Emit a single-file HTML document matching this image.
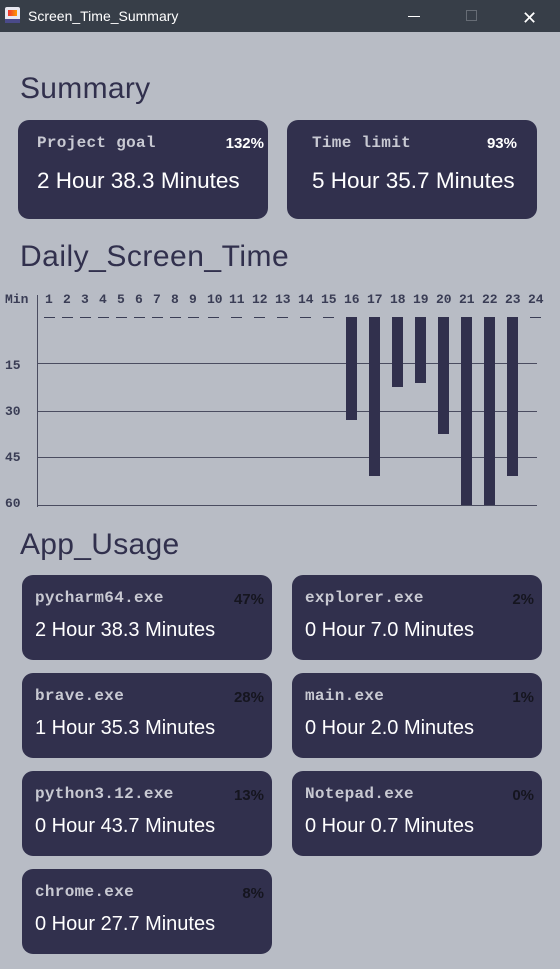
<!DOCTYPE html>
<html><head><meta charset="utf-8"><style>
*{margin:0;padding:0;box-sizing:border-box}
body{width:560px;height:969px;background:#b8bcc5;position:relative;overflow:hidden;font-family:"Liberation Sans",sans-serif}
.tb{position:absolute;left:0;top:0;width:560px;height:32px;background:#373e48;color:#fff;font-size:14px}
.h{position:absolute;left:20px;font-size:30px;color:#31304d;letter-spacing:0.3px}
.card{position:absolute;width:250px;background:#31304d;border-radius:11px}
.lab{position:absolute;left:19px;font-family:"Liberation Mono",monospace;font-size:16px;color:#c8c9d2;font-weight:bold;letter-spacing:0.3px}
.pct{position:absolute;right:4px;font-family:"Liberation Sans",sans-serif;font-weight:bold;font-size:15px;color:#fff}
.val{position:absolute;left:19px;font-size:21.5px;color:#fff;white-space:nowrap}
.ax{position:absolute;font-family:"Liberation Mono",monospace;font-weight:bold;font-size:13px;color:#3a3d55}
.gl{position:absolute;left:38px;width:499px;height:1px;background:#4a4c60}
.bar{position:absolute;width:11px;background:#31304d;top:317px}
.d{position:absolute;top:317px;width:11px;height:1px;background:#3a3d55}
.app .pct{color:#15151f;font-weight:bold;font-family:"Liberation Sans",sans-serif;font-size:15px;right:8px}
</style></head><body>
<div class="tb">
<div style="position:absolute;left:5px;top:7px;width:15px;height:16px;background:#e8e8f0;border-radius:2px"><div style="position:absolute;left:3px;top:3px;width:9px;height:6px;background:linear-gradient(90deg,#e33,#f90)"></div><div style="position:absolute;left:0;bottom:0;width:15px;height:4px;background:#4a4a8a"></div></div>
<div style="position:absolute;left:28px;top:8px">Screen_Time_Summary</div>
<div style="position:absolute;left:408px;top:16px;width:12px;height:1px;background:#fff"></div>
<div style="position:absolute;left:466px;top:10px;width:11px;height:11px;border:1px solid #666c75"></div>
<div style="position:absolute;left:522px;top:8px;color:#fff;font-size:18px">✕</div>
</div>

<div class="h" style="top:72px">Summary</div>
<div class="card" style="left:18px;top:120px;height:99px">
<div class="lab" style="top:14px">Project goal</div><div class="pct" style="top:15px">132%</div>
<div class="val" style="top:48px;font-size:22.5px">2 Hour 38.3 Minutes</div></div>
<div class="card" style="left:287px;top:120px;height:99px">
<div class="lab" style="top:14px;left:25px">Time limit</div><div class="pct" style="top:15px;right:20px">93%</div>
<div class="val" style="top:48px;left:25px;font-size:22.5px">5 Hour 35.7 Minutes</div></div>

<div class="h" style="top:240px;letter-spacing:0.5px">Daily_Screen_Time</div>
<div class="ax" style="left:5px;top:292px">Min</div>
<div style="position:absolute;left:37px;top:295px;width:1px;height:212px;background:#4a4c60"></div>
<div class="gl" style="top:363px"></div><div class="gl" style="top:411px"></div><div class="gl" style="top:457px"></div><div class="gl" style="top:505px"></div>
<div class="ax" style="left:5px;top:358px">15</div>
<div class="ax" style="left:5px;top:404px">30</div>
<div class="ax" style="left:5px;top:450px">45</div>
<div class="ax" style="left:5px;top:496px">60</div>
<div class="ax" style="left:45px;top:292px">1</div><div class="ax" style="left:63px;top:292px">2</div><div class="ax" style="left:81px;top:292px">3</div><div class="ax" style="left:99px;top:292px">4</div><div class="ax" style="left:117px;top:292px">5</div><div class="ax" style="left:135px;top:292px">6</div><div class="ax" style="left:153px;top:292px">7</div><div class="ax" style="left:171px;top:292px">8</div><div class="ax" style="left:189px;top:292px">9</div><div class="ax" style="left:207px;top:292px">10</div><div class="ax" style="left:229px;top:292px">11</div><div class="ax" style="left:252px;top:292px">12</div><div class="ax" style="left:275px;top:292px">13</div><div class="ax" style="left:298px;top:292px">14</div><div class="ax" style="left:321px;top:292px">15</div><div class="ax" style="left:344px;top:292px">16</div><div class="ax" style="left:367px;top:292px">17</div><div class="ax" style="left:390px;top:292px">18</div><div class="ax" style="left:413px;top:292px">19</div><div class="ax" style="left:436px;top:292px">20</div><div class="ax" style="left:459px;top:292px">21</div><div class="ax" style="left:482px;top:292px">22</div><div class="ax" style="left:505px;top:292px">23</div><div class="ax" style="left:528px;top:292px">24</div>
<div class="d" style="left:44px"></div><div class="d" style="left:62px"></div><div class="d" style="left:80px"></div><div class="d" style="left:98px"></div><div class="d" style="left:116px"></div><div class="d" style="left:134px"></div><div class="d" style="left:152px"></div><div class="d" style="left:170px"></div><div class="d" style="left:188px"></div><div class="d" style="left:208px"></div><div class="d" style="left:231px"></div><div class="d" style="left:254px"></div><div class="d" style="left:277px"></div><div class="d" style="left:300px"></div><div class="d" style="left:323px"></div><div class="d" style="left:530px"></div>
<div class="bar" style="left:346px;height:103px"></div>
<div class="bar" style="left:369px;height:159px"></div>
<div class="bar" style="left:392px;height:70px"></div>
<div class="bar" style="left:415px;height:66px"></div>
<div class="bar" style="left:438px;height:117px"></div>
<div class="bar" style="left:461px;height:188px"></div>
<div class="bar" style="left:484px;height:188px"></div>
<div class="bar" style="left:507px;height:159px"></div>

<div class="h" style="top:528px">App_Usage</div>
<div class="app">
<div class="card" style="left:22px;top:575px;height:85px"><div class="lab" style="left:13px;top:14px">pycharm64.exe</div><div class="pct" style="top:16px">47%</div><div class="val" style="left:13px;top:44px;font-size:20px">2 Hour 38.3 Minutes</div></div>
<div class="card" style="left:292px;top:575px;height:85px"><div class="lab" style="left:13px;top:14px">explorer.exe</div><div class="pct" style="top:16px">2%</div><div class="val" style="left:13px;top:44px;font-size:20px">0 Hour 7.0 Minutes</div></div>
<div class="card" style="left:22px;top:673px;height:85px"><div class="lab" style="left:13px;top:14px">brave.exe</div><div class="pct" style="top:16px">28%</div><div class="val" style="left:13px;top:44px;font-size:20px">1 Hour 35.3 Minutes</div></div>
<div class="card" style="left:292px;top:673px;height:85px"><div class="lab" style="left:13px;top:14px">main.exe</div><div class="pct" style="top:16px">1%</div><div class="val" style="left:13px;top:44px;font-size:20px">0 Hour 2.0 Minutes</div></div>
<div class="card" style="left:22px;top:771px;height:85px"><div class="lab" style="left:13px;top:14px">python3.12.exe</div><div class="pct" style="top:16px">13%</div><div class="val" style="left:13px;top:44px;font-size:20px">0 Hour 43.7 Minutes</div></div>
<div class="card" style="left:292px;top:771px;height:85px"><div class="lab" style="left:13px;top:14px">Notepad.exe</div><div class="pct" style="top:16px">0%</div><div class="val" style="left:13px;top:44px;font-size:20px">0 Hour 0.7 Minutes</div></div>
<div class="card" style="left:22px;top:869px;height:85px"><div class="lab" style="left:13px;top:14px">chrome.exe</div><div class="pct" style="top:16px">8%</div><div class="val" style="left:13px;top:44px;font-size:20px">0 Hour 27.7 Minutes</div></div>
</div>
</body></html>
